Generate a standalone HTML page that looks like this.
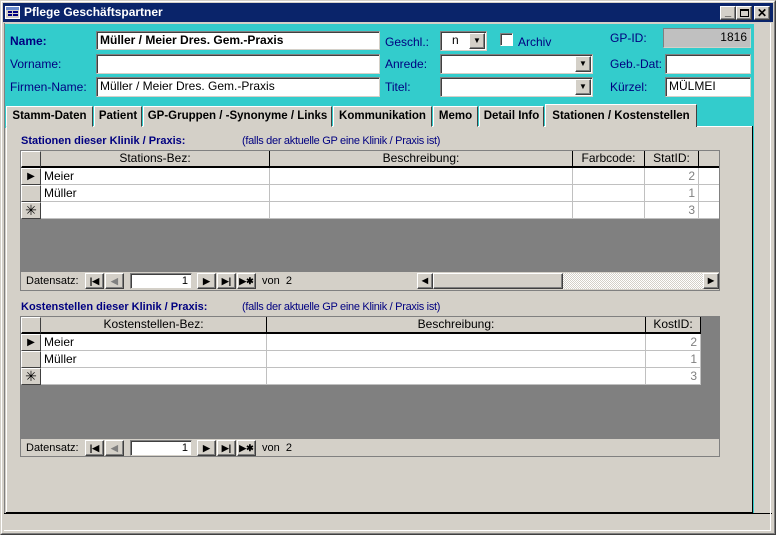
<!DOCTYPE html>
<html><head><meta charset="utf-8"><style>
*{box-sizing:border-box;margin:0;padding:0}
body{width:776px;height:535px;background:#D4D0C8;position:relative;overflow:hidden;font-family:"Liberation Sans",Arial,sans-serif;font-size:12px;color:#000}
.a{position:absolute}
.lbl{position:absolute;color:#000080;font-size:12px;line-height:14px;white-space:nowrap}
.in{position:absolute;background:#fff;border:1px solid #808080;border-right-color:#D4D0C8;border-bottom-color:#D4D0C8;box-shadow:inset 1px 1px 0 #404040;font-size:12px;line-height:16px;padding-left:3px;white-space:nowrap;overflow:hidden}
.btn{position:absolute;background:#D4D0C8;border:1px solid;border-color:#fff #404040 #404040 #fff;box-shadow:inset -1px -1px 0 #808080;font-size:9px;text-align:center;line-height:14px;font-weight:bold}
.tab{position:absolute;top:106px;height:21px;background:#D4D0C8;border:1px solid;border-color:#fff #404040 #D4D0C8 #fff;font-weight:bold;font-size:11.5px;line-height:18px;text-align:center;white-space:nowrap}
.cell{position:absolute;border-right:1px solid #C0C0C0;border-bottom:1px solid #C0C0C0;background:#fff;font-size:12px;line-height:16px;padding-left:3px;white-space:nowrap}
.hd{position:absolute;background:#D4D0C8;border-right:1px solid #000;border-bottom:2px solid #000;text-align:center;font-size:12px;line-height:15px;white-space:nowrap}
.rs{position:absolute;background:#D4D0C8;border:1px solid;border-color:#fff #404040 #404040 #fff;font-size:12px;text-align:center;line-height:15px}
.num{text-align:right;color:#808080;padding-right:3px}
.h1{position:absolute;color:#000080;font-weight:bold;font-size:11px;white-space:nowrap}
.h2{position:absolute;color:#000080;font-size:11px;white-space:nowrap;letter-spacing:-0.3px}
</style></head><body>
<!-- window borders -->
<div class="a" style="left:0;top:0;width:776px;height:535px;border:1px solid;border-color:#D4D0C8 #404040 #404040 #D4D0C8"></div>
<div class="a" style="left:1px;top:1px;width:774px;height:533px;border:1px solid;border-color:#fff #808080 #808080 #fff"></div>
<!-- title -->
<div class="a" style="left:3px;top:3px;width:770px;height:19px;background:#0A246A"></div>
<svg class="a" style="left:5px;top:5px" width="16" height="15"><rect x="0.5" y="1.5" width="14" height="12" fill="#D4D0C8" stroke="#fff"/><rect x="1" y="2" width="13" height="3" fill="#6A8ACA"/><rect x="3" y="6" width="4" height="2" fill="#000080"/><rect x="8" y="6" width="5" height="2" fill="#000080"/><rect x="3" y="9" width="4" height="2" fill="#000080"/><rect x="8" y="9" width="5" height="2" fill="#000080"/></svg>
<div class="a" style="left:24px;top:5px;color:#fff;font-weight:bold;font-size:12px;line-height:15px">Pflege Geschäftspartner</div>
<div class="btn" style="left:720px;top:6px;width:16px;height:14px;font-size:11px;line-height:10px">_</div>
<div class="btn" style="left:736px;top:6px;width:16px;height:14px"><div style="position:absolute;left:3px;top:2px;width:9px;height:8px;border:1px solid #000;border-top-width:2px"></div></div>
<div class="btn" style="left:754px;top:6px;width:16px;height:14px;font-size:12px;line-height:12px">✕</div>
<!-- cyan header -->
<div class="a" style="left:5px;top:24px;width:748px;height:104px;background:#33CCCC"></div>
<div class="a" style="left:4px;top:23px;width:1px;height:490px;background:#808080"></div>
<div class="lbl" style="left:10px;top:34px;font-weight:bold">Name:</div>
<div class="in" style="left:96px;top:31px;width:284px;height:19px;font-weight:bold">Müller / Meier Dres. Gem.-Praxis</div>
<div class="lbl" style="left:10px;top:57px">Vorname:</div>
<div class="in" style="left:96px;top:54px;width:284px;height:20px"></div>
<div class="lbl" style="left:10px;top:80px">Firmen-Name:</div>
<div class="in" style="left:96px;top:77px;width:284px;height:20px">Müller / Meier Dres. Gem.-Praxis</div>
<div class="lbl" style="left:385px;top:35px">Geschl.:</div>
<div class="in" style="left:440px;top:31px;width:47px;height:20px;padding-left:11px">n</div>
<div class="btn" style="left:469px;top:33px;width:16px;height:16px;font-size:8px">▼</div>
<div class="a" style="left:500px;top:33px;width:13px;height:13px;background:#fff;border:1px solid;border-color:#808080 #fff #fff #808080;box-shadow:inset 1px 1px 0 #404040"></div>
<div class="lbl" style="left:518px;top:35px">Archiv</div>
<div class="lbl" style="left:385px;top:57px">Anrede:</div>
<div class="in" style="left:440px;top:54px;width:153px;height:20px"></div>
<div class="btn" style="left:575px;top:56px;width:16px;height:16px;font-size:8px">▼</div>
<div class="lbl" style="left:385px;top:80px">Titel:</div>
<div class="in" style="left:440px;top:77px;width:153px;height:20px"></div>
<div class="btn" style="left:575px;top:79px;width:16px;height:16px;font-size:8px">▼</div>
<div class="lbl" style="left:610px;top:31px">GP-ID:</div>
<div class="in" style="left:663px;top:28px;width:88px;height:20px;background:#C0C0C0;text-align:right;padding-right:3px;box-shadow:none">1816</div>
<div class="lbl" style="left:610px;top:57px">Geb.-Dat:</div>
<div class="in" style="left:665px;top:54px;width:86px;height:20px"></div>
<div class="lbl" style="left:610px;top:80px">Kürzel:</div>
<div class="in" style="left:665px;top:77px;width:86px;height:20px">MÜLMEI</div>
<!-- tabs -->
<div class="a" style="left:6px;top:126px;width:747px;height:387px;background:#D4D0C8;border:1px solid;border-color:#fff #808080 #808080 #fff"></div>
<div class="a" style="left:6px;top:512px;width:747px;height:1px;background:#000"></div>
<div class="a" style="left:752px;top:126px;width:1px;height:387px;background:#000"></div>
<div class="tab" style="left:6px;width:87px">Stamm-Daten</div>
<div class="tab" style="left:94px;width:48px">Patient</div>
<div class="tab" style="left:143px;width:189px">GP-Gruppen / -Synonyme / Links</div>
<div class="tab" style="left:333px;width:99px">Kommunikation</div>
<div class="tab" style="left:433px;width:45px">Memo</div>
<div class="tab" style="left:479px;width:65px">Detail Info</div>
<div class="tab" style="left:545px;top:104px;width:152px;height:23px;line-height:22px;border-bottom:none">Stationen / Kostenstellen</div>
<!-- subform 1 -->
<div class="h1" style="left:21px;top:135px">Stationen dieser Klinik / Praxis:</div>
<div class="h2" style="left:242px;top:135px">(falls der aktuelle GP eine Klinik / Praxis ist)</div>
<div class="a" style="left:20px;top:150px;width:700px;height:141px;background:#808080;border:1px solid #808080"></div>
<div class="rs" style="left:21px;top:151px;width:20px;height:17px;border-bottom:2px solid #000"></div>
<div class="hd" style="left:41px;top:151px;width:229px;height:17px">Stations-Bez:</div>
<div class="hd" style="left:270px;top:151px;width:303px;height:17px">Beschreibung:</div>
<div class="hd" style="left:573px;top:151px;width:72px;height:17px">Farbcode:</div>
<div class="hd" style="left:645px;top:151px;width:54px;height:17px">StatID:</div>
<div class="hd" style="left:699px;top:151px;width:20px;height:17px;border-right:none"></div>
<div class="rs" style="left:21px;top:168px;width:20px;height:17px;font-size:10px">▶</div>
<div class="rs" style="left:21px;top:185px;width:20px;height:17px"></div>
<div class="rs" style="left:21px;top:202px;width:20px;height:17px;font-size:14px">✳</div>
<div class="cell" style="left:41px;top:168px;width:229px;height:17px">Meier</div>
<div class="cell" style="left:270px;top:168px;width:303px;height:17px"></div>
<div class="cell" style="left:573px;top:168px;width:72px;height:17px"></div>
<div class="cell num" style="left:645px;top:168px;width:54px;height:17px">2</div>
<div class="cell" style="left:699px;top:168px;width:20px;height:17px;border-right:none"></div>
<div class="cell" style="left:41px;top:185px;width:229px;height:17px">Müller</div>
<div class="cell" style="left:270px;top:185px;width:303px;height:17px"></div>
<div class="cell" style="left:573px;top:185px;width:72px;height:17px"></div>
<div class="cell num" style="left:645px;top:185px;width:54px;height:17px">1</div>
<div class="cell" style="left:699px;top:185px;width:20px;height:17px;border-right:none"></div>
<div class="cell" style="left:41px;top:202px;width:229px;height:17px"></div>
<div class="cell" style="left:270px;top:202px;width:303px;height:17px"></div>
<div class="cell" style="left:573px;top:202px;width:72px;height:17px"></div>
<div class="cell num" style="left:645px;top:202px;width:54px;height:17px">3</div>
<div class="cell" style="left:699px;top:202px;width:20px;height:17px;border-right:none"></div>
<div class="a" style="left:21px;top:272px;width:698px;height:18px;background:#D4D0C8"></div>
<div class="a" style="left:26px;top:274px;font-size:11px;line-height:14px">Datensatz:</div>
<div class="btn" style="left:85px;top:273px;width:19px;height:16px">|◀</div>
<div class="btn" style="left:105px;top:273px;width:19px;height:16px;color:#808080">◀</div>
<div class="in" style="left:130px;top:273px;width:62px;height:16px;text-align:right;padding-right:3px;line-height:14px;font-size:11px">1</div>
<div class="btn" style="left:197px;top:273px;width:19px;height:16px">▶</div>
<div class="btn" style="left:217px;top:273px;width:19px;height:16px">▶|</div>
<div class="btn" style="left:237px;top:273px;width:19px;height:16px">▶✱</div>
<div class="a" style="left:262px;top:274px;font-size:11px;line-height:14px">von&nbsp; 2</div>
<div class="a" style="left:417px;top:273px;width:302px;height:16px;background:repeating-conic-gradient(#fff 0 25%,#D4D0C8 0 50%) 0 0/2px 2px"></div>
<div class="btn" style="left:417px;top:273px;width:16px;height:16px;font-size:8px">◀</div>
<div class="btn" style="left:433px;top:273px;width:130px;height:16px"></div>
<div class="btn" style="left:703px;top:273px;width:16px;height:16px;font-size:8px">▶</div>
<!-- subform 2 -->
<div class="h1" style="left:21px;top:301px">Kostenstellen dieser Klinik / Praxis:</div>
<div class="h2" style="left:242px;top:301px">(falls der aktuelle GP eine Klinik / Praxis ist)</div>
<div class="a" style="left:20px;top:316px;width:700px;height:141px;background:#808080;border:1px solid #808080"></div>
<div class="rs" style="left:21px;top:317px;width:20px;height:17px;border-bottom:2px solid #000"></div>
<div class="hd" style="left:41px;top:317px;width:226px;height:17px">Kostenstellen-Bez:</div>
<div class="hd" style="left:267px;top:317px;width:379px;height:17px">Beschreibung:</div>
<div class="hd" style="left:646px;top:317px;width:55px;height:17px">KostID:</div>
<div class="rs" style="left:21px;top:334px;width:20px;height:17px;font-size:10px">▶</div>
<div class="rs" style="left:21px;top:351px;width:20px;height:17px"></div>
<div class="rs" style="left:21px;top:368px;width:20px;height:17px;font-size:14px">✳</div>
<div class="cell" style="left:41px;top:334px;width:226px;height:17px">Meier</div>
<div class="cell" style="left:267px;top:334px;width:379px;height:17px"></div>
<div class="cell num" style="left:646px;top:334px;width:55px;height:17px">2</div>
<div class="cell" style="left:41px;top:351px;width:226px;height:17px">Müller</div>
<div class="cell" style="left:267px;top:351px;width:379px;height:17px"></div>
<div class="cell num" style="left:646px;top:351px;width:55px;height:17px">1</div>
<div class="cell" style="left:41px;top:368px;width:226px;height:17px"></div>
<div class="cell" style="left:267px;top:368px;width:379px;height:17px"></div>
<div class="cell num" style="left:646px;top:368px;width:55px;height:17px">3</div>
<div class="a" style="left:21px;top:439px;width:698px;height:17px;background:#D4D0C8"></div>
<div class="a" style="left:26px;top:441px;font-size:11px;line-height:14px">Datensatz:</div>
<div class="btn" style="left:85px;top:440px;width:19px;height:16px">|◀</div>
<div class="btn" style="left:105px;top:440px;width:19px;height:16px;color:#808080">◀</div>
<div class="in" style="left:130px;top:440px;width:62px;height:16px;text-align:right;padding-right:3px;line-height:14px;font-size:11px">1</div>
<div class="btn" style="left:197px;top:440px;width:19px;height:16px">▶</div>
<div class="btn" style="left:217px;top:440px;width:19px;height:16px">▶|</div>
<div class="btn" style="left:237px;top:440px;width:19px;height:16px">▶✱</div>
<div class="a" style="left:262px;top:441px;font-size:11px;line-height:14px">von&nbsp; 2</div>
<!-- right cyan line and status -->
<div class="a" style="left:753px;top:24px;width:1px;height:489px;background:#33CCCC"></div>
<div class="a" style="left:4px;top:513px;width:768px;height:1px;background:#000"></div>
<div class="a" style="left:770px;top:23px;width:1px;height:508px;background:#fff"></div>
<div class="a" style="left:4px;top:530px;width:767px;height:1px;background:#fff"></div>
</body></html>
